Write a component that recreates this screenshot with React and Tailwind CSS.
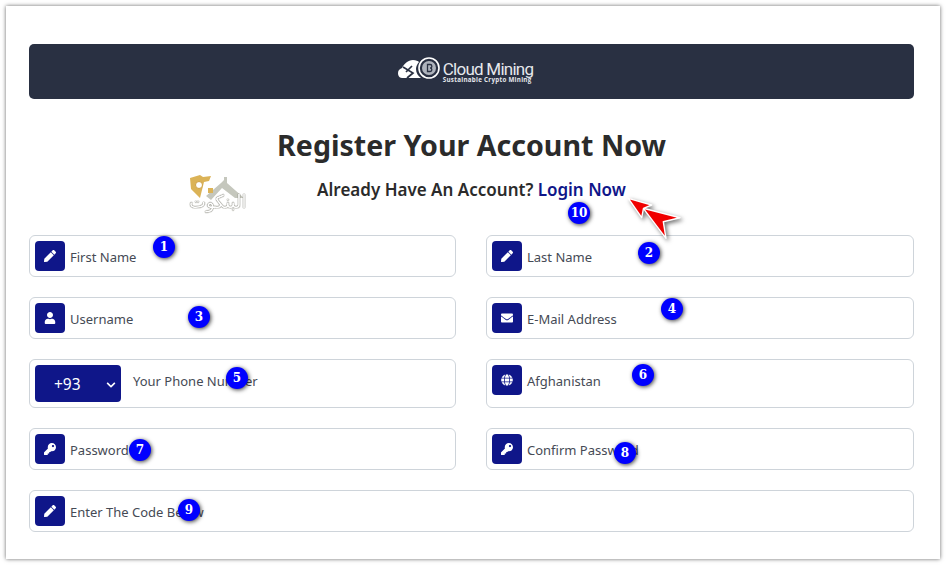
import { FaPen, FaUser, FaEnvelope, FaGlobe, FaKey, FaChevronDown } from 'react-icons/fa';

function Field({ icon: Icon, label, wide }) {
  return (
    <div className={`flex items-center h-[42px] p-[5px] border border-[#ced4da] rounded-[6px] bg-white ${wide ? 'col-span-2' : ''}`}>
      <span className="flex items-center justify-center w-[30px] h-[30px] rounded-[4px] bg-[#0f1689] text-white text-[12px]">
        <Icon />
      </span>
      <span className="ml-[5px] mt-[4px] text-[13px] text-[#454a55]">{label}</span>
    </div>
  );
}

function Badge({ className, children }) {
  return (
    <span className={`absolute flex items-center justify-center w-[22px] h-[22px] rounded-full bg-[#0000ff] text-white text-[12px] font-bold font-['DejaVu_Serif',serif] shadow-[1px_1px_4px_rgba(0,0,0,0.75)] ${className}`}>
      {children}
    </span>
  );
}

function Logo() {
  return (
    <div className="flex items-center gap-[1px] mr-[13px]">
      <svg width="45" height="26" viewBox="0 0 45 26" className="mb-[6px]">
        <path d="M1 17c0-3 2-4 4-5 2-4 6-8 11-8 3 0 5 1 6 2-2 2-3 5-3 7 0 4 2 7 5 9H5c-3 0-4-3-4-5z" fill="#fff" />
        <path d="M6 11l10 6-6 5 M15 10l-6 6" stroke="#293042" strokeWidth="1.7" fill="none" />
        <circle cx="32" cy="12" r="10" fill="#293042" stroke="#fff" strokeWidth="1.6" />
        <circle cx="32" cy="12" r="7" fill="#aeb3bc" />
        <path d="M30.5 8.5h2.6a1.6 1.6 0 0 1 0 3.5 1.7 1.7 0 0 1 0 3.5h-2.6z" fill="none" stroke="#293042" strokeWidth="1.3" />
      </svg>
      <div className="flex flex-col text-[#e6e8ec] leading-none">
        <span className="text-[17px] font-['Roboto',sans-serif] tracking-[-0.75px] leading-[15px]">Cloud Mining</span>
        <span className="text-[6.2px] font-bold font-['Open_Sans',sans-serif] tracking-[0.3px] leading-[5px]">Sustainable Crypto Mining</span>
      </div>
    </div>
  );
}

function Watermark() {
  return (
    <div className="absolute left-[186px] top-[174px] w-[62px] h-[42px] opacity-90">
      <svg width="62" height="28" viewBox="0 0 62 28" className="absolute left-0 top-0">
        <path d="M4 4l10-3 3 2 8-1-2 5-5 1-4 16-9-9z" fill="#d8ab45" />
        <circle cx="13" cy="11" r="3.5" fill="#fff" stroke="#c8962f" />
        <path d="M20 22l15-13 3-3 0-3 3 0 0 6 17 15H49L36 14 25 26z" fill="#bfc1b6" />
        <rect x="22" y="14" width="5" height="5" fill="#d8ab45" />
      </svg>
      <span dir="rtl" className="absolute left-[3px] top-[17px] text-[18px] leading-[22px] text-white font-['DejaVu_Sans',sans-serif] [text-shadow:0_0_1px_#6e6e62,0_0_1px_#6e6e62,0_0_1px_#6e6e62]">
        البنكوت
      </span>
    </div>
  );
}

function RedArrow() {
  return (
    <svg width="66" height="52" viewBox="0 0 66 52" className="absolute left-[624px] top-[194px] drop-shadow-[2px_2px_2px_rgba(0,0,0,0.55)]">
      <path d="M19.3 14.3L56 23.7 39.3 27.7 42 44.3z" fill="#f00000" stroke="#fff" strokeWidth="1.4" strokeLinejoin="round" />
      <path d="M4.3 4.3L27.7 11 19.5 14.3 17.7 23.7z" fill="#f00000" stroke="#fff" strokeWidth="1.4" strokeLinejoin="round" />
    </svg>
  );
}

export default function App() {
  return (
    <div className="relative w-[946px] h-[565px] pt-[6px] pl-[6px] bg-white overflow-hidden font-['Noto_Sans',sans-serif]">
      <div className="w-[934px] h-[553px] bg-white pl-[23px] pr-[26px] pt-[38px] shadow-[0_0_4px_rgba(0,0,0,0.6)]">
        <div className="flex items-center justify-center h-[55px] rounded-[5px] bg-[#293042]">
          <Logo />
        </div>
        <h1 className="mt-[25px] text-center text-[28.6px] leading-[41px] font-bold text-[#2b2b2b]">Register Your Account Now</h1>
        <p className="mt-[12px] text-center text-[17px] leading-[26px] font-semibold text-[#2b2b2b]">
          Already Have An Account? <a className="text-[#0f1689]">Login Now</a>
        </p>

        <div className="grid grid-cols-[427px_428px] gap-x-[30px] gap-y-[20px] mt-[32px]">
          <Field icon={FaPen} label="First Name" />
          <Field icon={FaPen} label="Last Name" />
          <Field icon={FaUser} label="Username" />
          <Field icon={FaEnvelope} label="E-Mail Address" />
          <div className="flex h-[49px] p-[5px] border border-[#ced4da] rounded-[6px] bg-white">
            <div className="flex items-center justify-between w-[86px] h-[37px] pl-[19px] pr-[5px] pt-[2px] rounded-[4px] bg-[#0f1689] text-white text-[15.5px]">
              +93
              <FaChevronDown className="text-[10px]" />
            </div>
            <span className="ml-[12px] mt-[4px] text-[13px] leading-[24px] text-[#454a55]">Your Phone Number</span>
          </div>
          <div className="flex items-start h-[49px] p-[5px] border border-[#ced4da] rounded-[6px] bg-white">
            <span className="flex items-center justify-center w-[30px] h-[30px] rounded-[4px] bg-[#0f1689] text-white text-[12px]">
              <FaGlobe />
            </span>
            <span className="ml-[5px] mt-[4px] text-[13px] leading-[24px] text-[#454a55]">Afghanistan</span>
          </div>
          <Field icon={FaKey} label="Password" />
          <Field icon={FaKey} label="Confirm Password" />
          <Field icon={FaPen} label="Enter The Code Below" wide />
        </div>
      </div>

      <Watermark />
      <RedArrow />
      <Badge className="left-[153px] top-[236px]">1</Badge>
      <Badge className="left-[638px] top-[242px]">2</Badge>
      <Badge className="left-[188px] top-[306px]">3</Badge>
      <Badge className="left-[661px] top-[298px]">4</Badge>
      <Badge className="left-[226px] top-[367px]">5</Badge>
      <Badge className="left-[632px] top-[364px]">6</Badge>
      <Badge className="left-[129px] top-[439px]">7</Badge>
      <Badge className="left-[614px] top-[442px]">8</Badge>
      <Badge className="left-[178px] top-[499px]">9</Badge>
      <Badge className="left-[568px] top-[202px]">10</Badge>
    </div>
  );
}
